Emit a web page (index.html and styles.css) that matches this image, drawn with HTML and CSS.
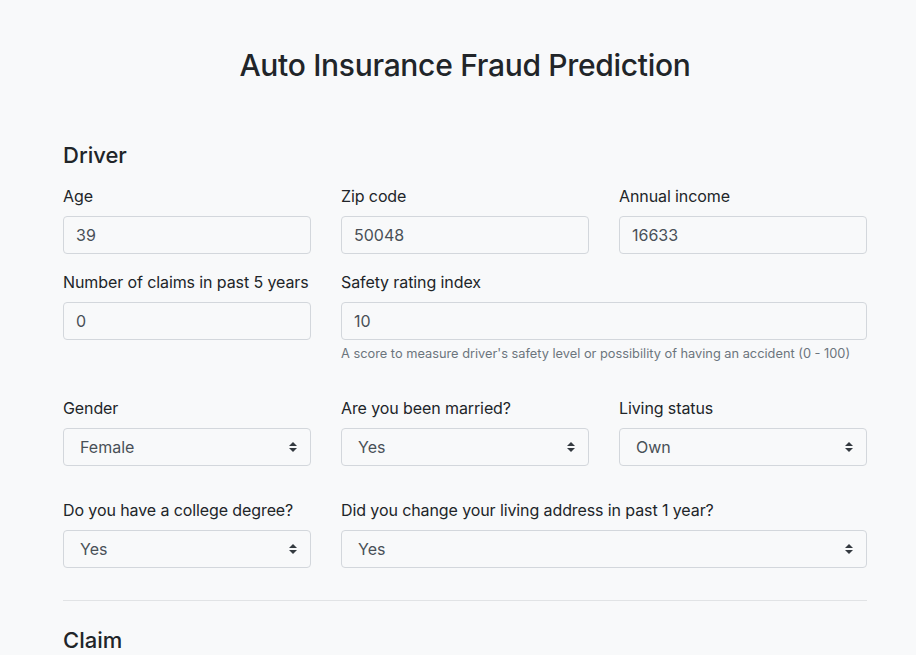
FILE: index.html
```html
<!DOCTYPE html>
<html lang="en">
<head>
  <meta charset="UTF-8">
  <meta name="viewport" content="width=device-width, initial-scale=1.0">
  <title>Auto Insurance Fraud Prediction</title>
  <link rel="stylesheet" href="styles.css">
</head>
<body>
  <div class="container">
    <h2 class="page-title">Auto Insurance Fraud Prediction</h2>

    <form class="fraud-form">
      <h4 class="section-title">Driver</h4>

      <div class="form-row">
        <div class="form-group">
          <label>Age</label>
          <input class="form-control" type="text" value="39">
        </div>
        <div class="form-group">
          <label>Zip code</label>
          <input class="form-control" type="text" value="50048">
        </div>
        <div class="form-group">
          <label>Annual income</label>
          <input class="form-control" type="text" value="16633">
        </div>
      </div>

      <div class="form-row row-spaced">
        <div class="form-group">
          <label>Number of claims in past 5 years</label>
          <input class="form-control" type="text" value="0">
        </div>
        <div class="form-group span-2">
          <label>Safety rating index</label>
          <input class="form-control" type="text" value="10">
          <small class="form-text">A score to measure driver's safety level or possibility of having an accident (0 - 100)</small>
        </div>
      </div>

      <div class="form-row row-spaced">
        <div class="form-group">
          <label>Gender</label>
          <div class="select">Female</div>
        </div>
        <div class="form-group">
          <label>Are you been married?</label>
          <div class="select">Yes</div>
        </div>
        <div class="form-group">
          <label>Living status</label>
          <div class="select">Own</div>
        </div>
      </div>

      <div class="form-row">
        <div class="form-group">
          <label>Do you have a college degree?</label>
          <div class="select">Yes</div>
        </div>
        <div class="form-group span-2">
          <label>Did you change your living address in past 1 year?</label>
          <div class="select">Yes</div>
        </div>
      </div>

      <hr class="divider">

      <h4 class="section-title">Claim</h4>
    </form>
  </div>
</body>
</html>
```

FILE: styles.css
```css
html, body {
  margin: 0;
  padding: 0;
  background: #f8f9fa;
  color: #212529;
  font-family: Inter, "Noto Sans", sans-serif;
  font-size: 16px;
  line-height: 1.5;
  overflow: hidden;
}

.container {
  width: 804px;
  margin-left: 63px;
}

.page-title {
  margin: 47px 0 0;
  font-size: 30px;
  font-weight: 500;
  line-height: 36px;
  text-align: center;
  letter-spacing: -0.3px;
}

.section-title {
  margin: 59px 0 16px;
  font-size: 22px;
  font-weight: 500;
  line-height: 26px;
}

.form-row {
  display: grid;
  grid-template-columns: repeat(3, 1fr);
  column-gap: 30px;
}

.span-2 {
  grid-column: span 2;
}

.row-spaced {
  margin-bottom: 16px;
}

.form-group {
  margin-bottom: 16px;
}

label {
  display: block;
  margin-bottom: 8px;
  font-size: 16px;
  line-height: 24px;
  letter-spacing: -0.1px;
  white-space: nowrap;
}

.form-control,
.select {
  box-sizing: border-box;
  display: block;
  width: 100%;
  height: 38px;
  padding: 6px 12px;
  font-family: inherit;
  font-size: 16px;
  line-height: 24px;
  color: #495057;
  background: #f8f9fa;
  border: 1px solid #d3d7dc;
  border-radius: 4px;
}

.select {
  position: relative;
  padding-left: 16px;
}

/* up/down caret on the right of each select */
.select::before,
.select::after {
  content: "";
  position: absolute;
  right: 13px;
  width: 0;
  height: 0;
  border-left: 4px solid transparent;
  border-right: 4px solid transparent;
}

.select::before {
  top: 13px;
  border-bottom: 4px solid #343a40;
}

.select::after {
  top: 19px;
  border-top: 4px solid #343a40;
}

.form-text {
  display: block;
  margin-top: 4px;
  font-size: 12.8px;
  line-height: 20px;
  color: #6c757d;
}

.divider {
  margin: 16px 0 0;
  border: 0;
  border-top: 1px solid #e1e3e5;
}

.divider + .section-title {
  margin-top: 26px;
}
```
